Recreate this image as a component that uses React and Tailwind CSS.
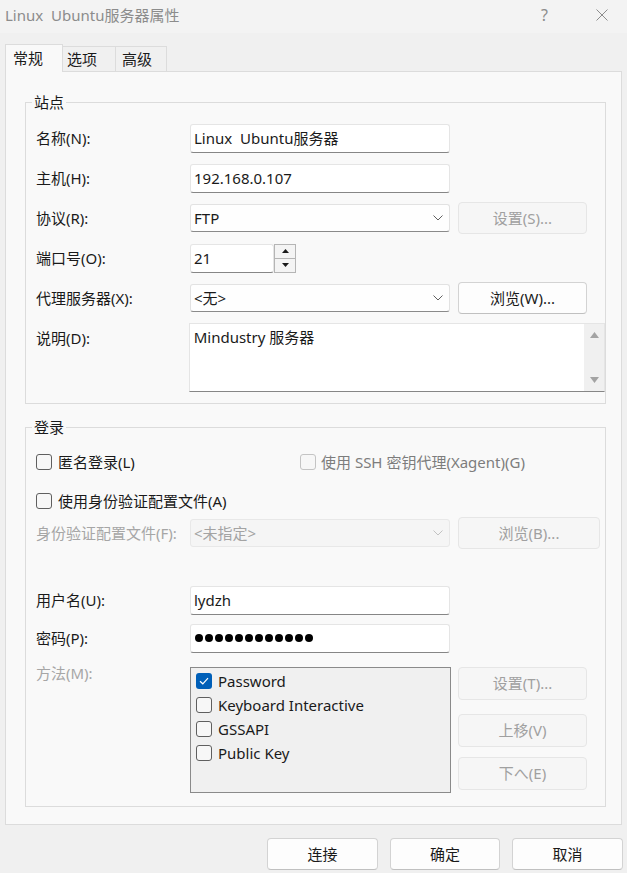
const font = "font-['Noto_Sans','Noto_Sans_CJK_SC',sans-serif]";

function Chevron({ light }) {
  return (
    <svg width="10" height="6" viewBox="0 0 10 6" className="shrink-0">
      <polyline points="0.5,0.5 5,5 9.5,0.5" fill="none" stroke={light ? '#c2c2c2' : '#606060'} strokeWidth="1" />
    </svg>
  );
}

function TextBox({ children, width = 'w-[260px]' }) {
  return (
    <div className={`${width} h-[29px] bg-white border border-[#e5e5e5] border-b-[#868686] rounded-[3px] flex items-center px-[3px] text-[15px] text-[#1a1a1a]`}>
      {children}
    </div>
  );
}

function Select({ value, disabled }) {
  return (
    <div
      className={`w-[260px] h-[28px] rounded-[3px] border flex items-center justify-between pl-[3px] pr-[6px] text-[15px] ${
        disabled
          ? 'bg-[#f5f5f5] border-[#e8e8e8] text-[#a3a3a3]'
          : 'bg-[#fefefe] border-[#e2e2e2] border-b-[#8a8a8a] text-[#1a1a1a]'
      }`}
    >
      <span>{value}</span>
      <Chevron light={disabled} />
    </div>
  );
}

function Btn({ children, disabled, w = 'w-[129px]', h = 'h-[32px]' }) {
  return (
    <button
      className={`${w} ${h} shrink-0 rounded-[4px] border text-[15px] flex items-center justify-center ${
        disabled
          ? 'bg-[#f6f6f6] border-[#e6e6e6] text-[#a0a0a0]'
          : 'bg-[#fdfdfd] border-[#d3d3d3] border-b-[#c0c0c0] text-[#1a1a1a]'
      }`}
    >
      {children}
    </button>
  );
}

function Check({ checked, disabled }) {
  if (checked) {
    return (
      <span className="w-[16px] h-[16px] shrink-0 rounded-[3px] bg-[#005fb8] flex items-center justify-center">
        <svg width="10" height="8" viewBox="0 0 10 8">
          <polyline points="1,4.2 3.8,6.8 9,1.2" fill="none" stroke="white" strokeWidth="1.2" />
        </svg>
      </span>
    );
  }
  return (
    <span
      className={`w-[16px] h-[16px] shrink-0 rounded-[3px] border bg-[#f7f7f7] ${
        disabled ? 'border-[#c4c4c4]' : 'border-[#5f5f5f]'
      }`}
    ></span>
  );
}

function Group({ title, className, children }) {
  return (
    <div className={`relative border border-[#dcdcdc] ${className}`}>
      {/* caption sits over the top border */}
      <span className="absolute -top-[11px] left-[6px] px-[2px] bg-[#f9f9f9] text-[15px] leading-[20px] text-[#1a1a1a]">
        {title}
      </span>
      {children}
    </div>
  );
}

export default function App() {
  return (
    <div className={`w-[627px] h-[873px] bg-[#f0f0f0] ${font} text-[#1a1a1a] overflow-hidden`}>
      {/* title bar */}
      <div className="h-[33px] bg-[#f3f3f3] flex items-start pt-[5px] pl-[5px] pr-[19px]">
        <span className="text-[15px] leading-[20px] text-[#8c8c8c] flex-1">Linux&nbsp; Ubuntu服务器属性</span>
        <span className="text-[16px] leading-[20px] text-[#8c8c8c] mr-[48px]">?</span>
        <svg width="12" height="12" viewBox="0 0 12 12" className="mt-[4px]">
          <path d="M0.5 0.5 L11.5 11.5 M11.5 0.5 L0.5 11.5" stroke="#8c8c8c" strokeWidth="1" fill="none" />
        </svg>
      </div>

      {/* tabs */}
      <div className="flex items-end h-[28px] mt-[11px] pl-[5px]">
        <div className="relative z-10 h-[28px] w-[58px] bg-[#f9f9f9] border-l border-t border-r border-[#dcdcdc] pl-[7px] flex items-center text-[15px]">
          常规
        </div>
        <div className="h-[26px] w-[53px] border-t border-r border-[#dcdcdc] pl-[4px] flex items-center text-[15px]">
          选项
        </div>
        <div className="h-[26px] w-[51px] border-t border-r border-[#dcdcdc] pl-[6px] flex items-center text-[15px]">
          高级
        </div>
      </div>

      {/* tab page */}
      <div className="-mt-px ml-[5px] w-[617px] bg-[#f9f9f9] border border-[#dcdcdc] pt-[30px] pb-[17px] pl-[19px]">
        <Group title="站点" className="w-[581px] pt-[15px] pb-[11px] pl-[10px]">
          <div className="flex items-center h-[40px]">
            <span className="w-[154px] text-[15px]">名称(N):</span>
            <TextBox>Linux&nbsp; Ubuntu服务器</TextBox>
          </div>
          <div className="flex items-center h-[40px]">
            <span className="w-[154px] text-[15px]">主机(H):</span>
            <TextBox>192.168.0.107</TextBox>
          </div>
          <div className="flex items-center h-[40px]">
            <span className="w-[154px] text-[15px]">协议(R):</span>
            <Select value="FTP" />
            <div className="ml-[8px]">
              <Btn disabled>设置(S)...</Btn>
            </div>
          </div>
          <div className="flex items-center h-[40px]">
            <span className="w-[154px] text-[15px]">端口号(O):</span>
            <TextBox width="w-[84px]">21</TextBox>
            <div className="w-[22px] h-[29px] border border-[#b5b5b5] bg-[#f4f4f4] flex flex-col">
              <div className="flex-1 flex items-center justify-center border-b border-[#b5b5b5]">
                <svg width="7" height="4" viewBox="0 0 7 4"><polygon points="0,4 3.5,0 7,4" fill="#1a1a1a" /></svg>
              </div>
              <div className="flex-1 flex items-center justify-center">
                <svg width="7" height="4" viewBox="0 0 7 4"><polygon points="0,0 3.5,4 7,0" fill="#1a1a1a" /></svg>
              </div>
            </div>
          </div>
          <div className="flex items-center h-[40px]">
            <span className="w-[154px] text-[15px]">代理服务器(X):</span>
            <Select value="<无>" />
            <div className="ml-[8px]">
              <Btn>浏览(W)...</Btn>
            </div>
          </div>
          <div className="flex items-start mt-[5px]">
            <span className="w-[154px] text-[15px] leading-[20px] mt-[5px]">说明(D):</span>
            <div className="w-[420px] h-[69px] bg-white border border-[#e5e5e5] border-b-[#868686] flex">
              <div className="flex-1 pl-[4px] pt-[3px] text-[15px] leading-[20px]">Mindustry 服务器</div>
              <div className="w-[20px] bg-[#f0f0f0] flex flex-col items-center justify-between py-[8px]">
                <svg width="9" height="6" viewBox="0 0 9 6"><polygon points="0,6 4.5,0 9,6" fill="#a3a3a3" /></svg>
                <svg width="9" height="6" viewBox="0 0 9 6"><polygon points="0,0 4.5,6 9,0" fill="#a3a3a3" /></svg>
              </div>
            </div>
          </div>
        </Group>

        <Group title="登录" className="w-[581px] mt-[23px] pt-[18px] pb-[13px] pl-[10px]">
          <div className="flex items-center h-[32px]">
            <label className="flex items-center gap-[6px] w-[264px] text-[15px]">
              <Check />
              匿名登录(L)
            </label>
            <label className="flex items-center gap-[5px] text-[15px] text-[#7d7d7d]">
              <Check disabled />
              使用 SSH 密钥代理(Xagent)(G)
            </label>
          </div>
          <div className="flex items-center h-[32px] mt-[7px]">
            <label className="flex items-center gap-[6px] text-[15px]">
              <Check />
              使用身份验证配置文件(A)
            </label>
          </div>
          <div className="flex items-center h-[32px]">
            <span className="w-[154px] text-[15px] text-[#a6a6a6]">身份验证配置文件(F):</span>
            <Select value="<未指定>" disabled />
            <div className="ml-[8px]">
              <Btn disabled w="w-[142px]">浏览(B)...</Btn>
            </div>
          </div>
          <div className="flex items-center h-[32px] mt-[35px]">
            <span className="w-[154px] text-[15px]">用户名(U):</span>
            <TextBox>lydzh</TextBox>
          </div>
          <div className="flex items-center h-[32px] mt-[6px]">
            <span className="w-[154px] text-[15px]">密码(P):</span>
            <TextBox>
              <span className="flex gap-[2px] pl-[1px]">
                {Array.from({ length: 12 }).map((_, i) => (
                  <span key={i} className="w-[8px] h-[8px] rounded-full bg-black"></span>
                ))}
              </span>
            </TextBox>
          </div>
          <div className="flex items-start mt-[13px]">
            <span className="w-[154px] text-[15px] leading-[20px] -mt-[4px] text-[#a6a6a6]">方法(M):</span>
            <div className="w-[261px] h-[126px] bg-[#f0f0f0] border border-[#8a8a8a] pt-[1px] pl-[5px]">
              {['Password', 'Keyboard Interactive', 'GSSAPI', 'Public Key'].map((m, i) => (
                <div key={m} className="flex items-center gap-[6px] h-[24px] text-[15px]">
                  <Check checked={i === 0} />
                  {m}
                </div>
              ))}
            </div>
            <div className="ml-[7px] flex flex-col">
              <Btn disabled h="h-[33px]">设置(T)...</Btn>
              <div className="mt-[14px]">
                <Btn disabled h="h-[33px]">上移(V)</Btn>
              </div>
              <div className="mt-[10px]">
                <Btn disabled h="h-[33px]">下へ(E)</Btn>
              </div>
            </div>
          </div>
        </Group>
      </div>

      {/* dialog buttons */}
      <div className="flex justify-end gap-[12px] pr-[4px] mt-[13px]">
        <Btn w="w-[111px]">连接</Btn>
        <Btn w="w-[110px]">确定</Btn>
        <Btn w="w-[111px]">取消</Btn>
      </div>
    </div>
  );
}
